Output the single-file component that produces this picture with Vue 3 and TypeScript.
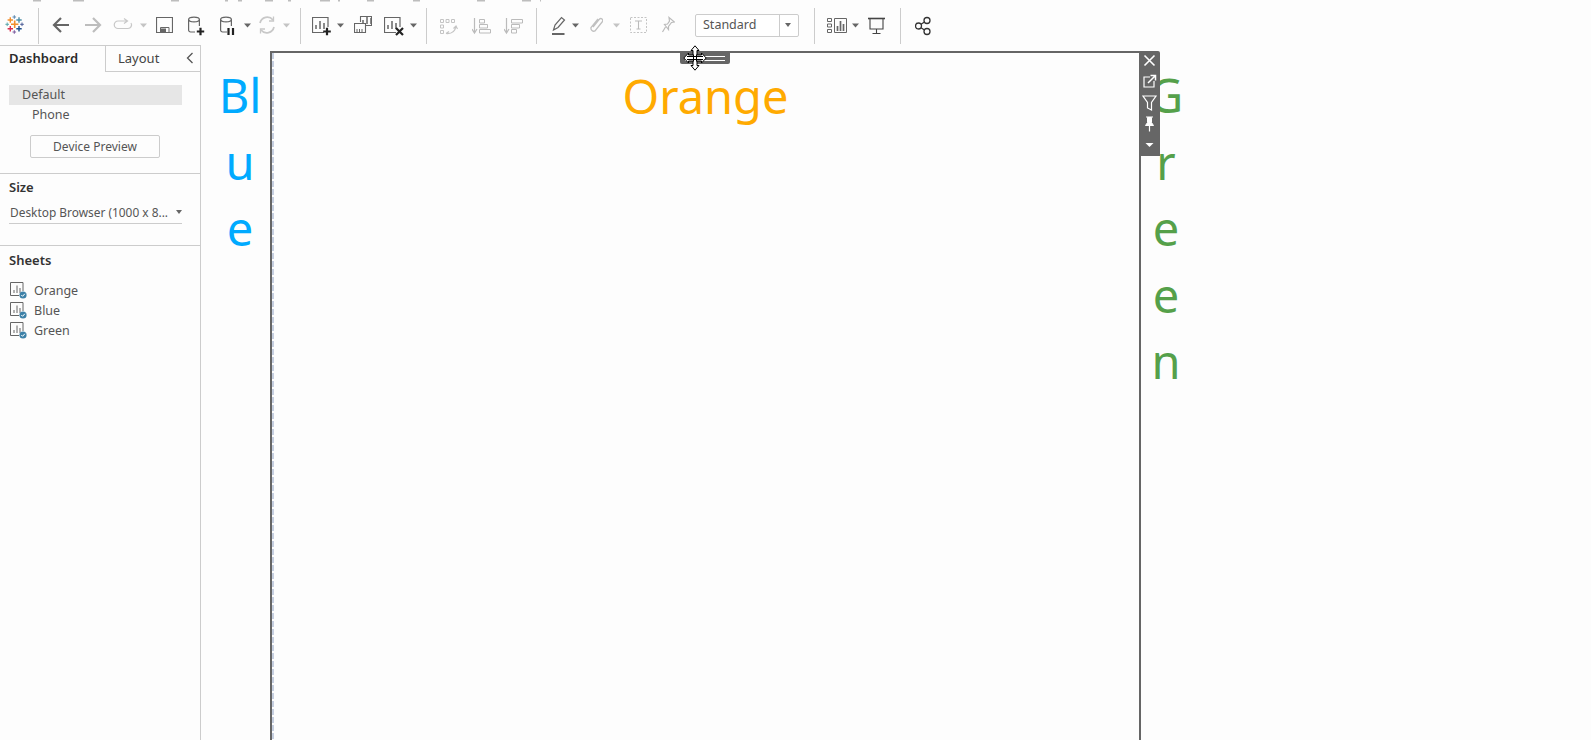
<script setup lang="ts">
interface Tool { gap: number; w: number; svg: string }

const cross = (x: number, y: number, a: number, t: number, c: string): string =>
  `<path d="M${x - a} ${y}H${x + a}M${x} ${y - a}V${y + a}" stroke="${c}" stroke-width="${t}" fill="none"/>`

const caret = (c = '#666'): Tool => ({ gap: 0, w: 7, svg: `<path d="M0 23.5H7L3.5 27.5Z" fill="${c}"/>` })
const at = (t: Tool, gap: number): Tool => ({ ...t, gap })
const G = '#bdbdbd'
const D = '#666'
const K = '#222'

const db = (c: string) =>
  `<g fill="none" stroke="${c}" stroke-width="1.2"><ellipse cx="6" cy="19.5" rx="5.4" ry="2.4"/><path d="M.6 19.5V30a2 2 0 0 0 2 2H7M11.4 19.5V26"/></g>`
const bars = (x: number, b: number, c = D) =>
  `<path d="M${x} ${b}v-4M${x + 4} ${b}v-8M${x + 8} ${b}v-6" stroke="${c}" stroke-width="1.5" fill="none"/>`
const chart = `<path d="M12 32.5H.5V17.5H16V27" fill="none" stroke="${D}" stroke-width="1.2"/>`

const leftTools: Tool[] = [
  {
    gap: 5, w: 20,
    svg: cross(9.7, 24.3, 3.7, 1.6, '#f28e2b') + cross(5.3, 20, 2.7, 1.4, '#f28e2b') + cross(14, 20, 2.7, 1.4, '#4e8ea6')
      + cross(9.3, 17, 1.8, 1, '#5a87b0') + cross(2.2, 24.3, 1.8, 1, '#59a6a8') + cross(17, 24.3, 1.8, 1, '#4c5c96')
      + cross(5.3, 28.7, 2.7, 1.4, '#d9304f') + cross(14, 28.7, 2.7, 1.4, '#1f4f8b') + cross(9.3, 32, 1.8, 1, '#7a5a9e'),
  },
  { gap: 13, w: 1, svg: `<rect y="8" width="1" height="36" fill="#ccc"/>` },
  { gap: 13, w: 18, svg: `<path d="M17 25H2M9 18L2 25L9 32" fill="none" stroke="${D}" stroke-width="2.2"/>` },
  { gap: 14, w: 18, svg: `<path d="M1 25H16M9 18L16 25L9 32" fill="none" stroke="${G}" stroke-width="2.2"/>` },
  { gap: 11, w: 20, svg: `<path d="M14 21H5a3.6 3.6 0 0 0 0 7.5H15a3.6 3.6 0 0 0 3-5.5M11 18.5L14.5 21L11 23.5" fill="none" stroke="#c8c8c8" stroke-width="1.2"/>` },
  at(caret('#c4c4c4'), 7),
  {
    gap: 9, w: 17,
    svg: `<path d="M.5 17.5H16.5V32.5H.5Z" fill="none" stroke="${D}" stroke-width="1.2"/><path d="M4.5 32.5V27.5H13V32.5" fill="none" stroke="${D}"/><rect x="5" y="28.5" width="5" height="4" fill="${D}"/>`,
  },
  { gap: 15, w: 18, svg: db(D) + cross(12.5, 31.5, 3.7, 2.2, K) },
  { gap: 14, w: 18, svg: db(D) + `<path d="M8.5 28V35M13 28V35" stroke="${K}" stroke-width="2.2"/>` },
  at(caret(), 6),
  {
    gap: 7, w: 18,
    svg: `<g fill="none" stroke="#c8c8c8" stroke-width="1.7"><path d="M2 23a7.4 7.4 0 0 1 13-3M16 27a7.4 7.4 0 0 1-13 3"/><path d="M15.5 16.5V21H11M2.5 33.5V29H7" stroke-width="1.3"/></g>`,
  },
  at(caret('#c4c4c4'), 7),
  { gap: 10, w: 1, svg: `<rect y="8" width="1" height="36" fill="#ccc"/>` },
  { gap: 11, w: 20, svg: chart + bars(4, 29) + cross(15, 31.5, 3.8, 2.2, K) },
  at(caret(), 5),
  {
    gap: 10, w: 18,
    svg: `<g fill="none" stroke="${D}" stroke-width="1.1"><path d="M6.5 22V16.5H17.5V25.5H12"/><path d="M.5 23.5H11.5V32.5H.5Z"/></g>` + bars(9, 24) + `<path d="M3 32v-3M5.5 32v-3M8 32v-3" stroke="${D}"/>`,
  },
  { gap: 12, w: 20, svg: chart + bars(4, 29) + `<path d="M12 28L19 35M19 28L12 35" stroke="${K}" stroke-width="2.2"/>` },
  at(caret(), 6),
  { gap: 9, w: 1, svg: `<rect y="8" width="1" height="36" fill="#ccc"/>` },
  {
    gap: 13, w: 18,
    svg: `<g fill="none" stroke="#c4c4c4"><path d="M.5 19.5h3v3h-3zM6 19.5h3v3H6zM11.5 19.5h3v3h-3zM.5 25h3v3h-3zM.5 30.5h3v3h-3z"/><path d="M6 33.5c5 .5 9-2 10-7M13.5 28.5l2.5-2.5 1.5 3M6 33.5l3-2" stroke-width="1.2"/></g>`,
  },
  {
    gap: 14, w: 19,
    svg: `<g fill="none" stroke="#bbb"><path d="M2.5 18V32M0 29L2.5 33L5 29" stroke-width="1.2"/><path d="M7.5 19.5h5v3.5h-5zM7.5 24.5h8v3.5h-8zM7.5 29.5h11v3.5h-11z"/></g>`,
  },
  {
    gap: 13, w: 19,
    svg: `<g fill="none" stroke="#bbb"><path d="M2.5 18V32M0 29L2.5 33L5 29" stroke-width="1.2"/><path d="M7.5 19.5h11v3.5h-11zM7.5 24.5h8v3.5h-8zM7.5 29.5h5v3.5h-5z"/></g>`,
  },
  { gap: 13, w: 1, svg: `<rect y="8" width="1" height="36" fill="#ccc"/>` },
  {
    gap: 15, w: 14,
    svg: `<path d="M1.5 30L3 25L9.5 17.5L12.5 20L6 27.5Z" fill="none" stroke="${D}" stroke-width="1.2"/><rect y="33" width="12.5" height="2" fill="${D}"/>`,
  },
  at(caret(), 6),
  {
    gap: 11, w: 13,
    svg: `<path d="M3 27L9.5 19a2 2 0 0 1 3 2.5L5 31a3 3 0 0 1-4-3.5L8 19" fill="none" stroke="#c0c0c0" stroke-width="1.3"/>`,
  },
  at(caret('#c4c4c4'), 10),
  {
    gap: 10, w: 17,
    svg: `<rect x=".5" y="17.5" width="16" height="15" fill="none" stroke="#c4c4c4" stroke-dasharray="2 1.5"/><path d="M5 21H12M8.5 21V29M6.5 29H10.5" fill="none" stroke="#bbb" stroke-width="1.1"/>`,
  },
  {
    gap: 14, w: 14,
    svg: `<path d="M8 17.5L13.5 22L10.5 22.5L7.5 26.5L7.5 29.5L3.5 24.5L6.5 24L8.5 21ZM4.5 27L1.5 32" fill="none" stroke="#bbb" stroke-width="1.2"/>`,
  },
]

const rightTools: Tool[] = [
  { gap: 15, w: 1, svg: `<rect y="8" width="1" height="36" fill="#ccc"/>` },
  {
    gap: 12, w: 20,
    svg: `<g fill="none" stroke="${D}"><path d="M.5 18.5h4v3h-4zM.5 24h4v3h-4zM.5 29.5h4v3h-4zM7.5 18.5h12v14h-12z"/></g><path d="M10.5 31v-5M13.5 31V21M16.5 31v-7" stroke="${D}" stroke-width="1.7"/>`,
  },
  at(caret(), 5),
  {
    gap: 9, w: 18,
    svg: `<path d="M0 18.5H17" stroke="#444" stroke-width="1.6"/><path d="M2 19V29H15V19M8.5 29V33.5M4.5 33.5H12.5" fill="none" stroke="#444" stroke-width="1.1"/>`,
  },
  { gap: 14, w: 1, svg: `<rect y="8" width="1" height="36" fill="#ccc"/>` },
  {
    gap: 14, w: 16,
    svg: `<g fill="none" stroke="#333" stroke-width="1.3"><circle cx="3.5" cy="26" r="3"/><circle cx="12" cy="20.5" r="3"/><circle cx="12" cy="31.5" r="3"/><path d="M6 24.3L9.5 22M6 27.7L9.5 30"/></g>`,
  },
]

const topMarks: [number, number][] = [
  [33, 8], [73, 11], [171, 8], [225, 3], [238, 4], [265, 8], [288, 3], [320, 10], [338, 2],
  [367, 7], [413, 7], [477, 8], [522, 9], [540, 1],
]

const sheets = ['Orange', 'Blue', 'Green']
</script>

<template>
  <div class="page">
    <svg class="marks" width="560" height="2">
      <rect v-for="m in topMarks" :key="m[0]" :x="m[0]" y="0" :width="m[1]" height="1.5" fill="#bdbdbd" />
    </svg>

    <header class="toolbar">
      <svg
        v-for="(t, i) in leftTools"
        :key="'l' + i"
        class="tool"
        :style="{ marginLeft: t.gap + 'px' }"
        :width="t.w"
        height="45"
        :viewBox="`0 0 ${t.w} 45`"
        v-html="t.svg"
      />
      <div class="mark-select">
        <span class="mark-value">Standard</span>
        <span class="mark-caret"></span>
      </div>
      <svg
        v-for="(t, i) in rightTools"
        :key="'r' + i"
        class="tool"
        :style="{ marginLeft: t.gap + 'px' }"
        :width="t.w"
        height="45"
        :viewBox="`0 0 ${t.w} 45`"
        v-html="t.svg"
      />
    </header>

    <main class="body">
      <aside class="sidebar">
        <nav class="tabs">
          <div class="tab active">Dashboard</div>
          <div class="tab other">
            <span>Layout</span>
            <svg width="8" height="12" viewBox="0 0 8 12"><path d="M6.5 1L1.5 6L6.5 11" fill="none" stroke="#555" stroke-width="1.3" /></svg>
          </div>
        </nav>

        <section class="devices">
          <div class="device selected">Default</div>
          <div class="device phone">Phone</div>
          <button class="preview" type="button">Device Preview</button>
        </section>

        <section class="size">
          <h3>Size</h3>
          <div class="size-select">
            <span>Desktop Browser (1000 x 8...</span>
            <i class="tiny-caret"></i>
          </div>
        </section>

        <section class="sheets">
          <h3>Sheets</h3>
          <ul>
            <li v-for="s in sheets" :key="s">
              <svg width="18" height="17" viewBox="0 0 18 17">
                <path d="M9 13.5H.5V.5H13V9" fill="none" stroke="#666" />
                <path d="M4 11V8M7 11V3.5M10 11V6" stroke="#666" fill="none" />
                <circle cx="13" cy="13" r="3.6" fill="#3d81a8" />
                <path d="M11.3 13L12.6 14.3L14.8 11.8" stroke="#fff" fill="none" />
              </svg>
              <span>{{ s }}</span>
            </li>
          </ul>
        </section>
      </aside>

      <section class="canvas">
        <div class="title col-blue">Blue</div>

        <div class="frame">
          <div class="title col-orange">Orange</div>

          <div class="handle">
            <svg width="50" height="13" viewBox="0 0 50 13">
              <path d="M5 5.5H45M5 9.5H45" stroke="#fff" />
            </svg>
          </div>

          <svg class="move-cursor" width="24" height="26" viewBox="0 0 24 26">
            <path
              d="M12 .8L16 5.5H14V10H18.5V8L23.2 13L18.5 18V16H14V20.5H16L12 25.2L8 20.5H10V16H5.5V18L.8 13L5.5 8V10H10V5.5H8Z"
              fill="#fff"
              stroke="#000"
            />
            <path d="M10.5 9.5V16.5M13.5 9.5V16.5M4 11.5H20M4 14.5H20" stroke="#000" fill="none" />
          </svg>

          <div class="float-bar">
            <svg width="21" height="20" viewBox="0 0 21 20"><path d="M5.5 4.5L15.5 14.5M15.5 4.5L5.5 14.5" stroke="#fff" stroke-width="1.6" /></svg>
            <svg width="21" height="21" viewBox="0 0 21 21">
              <path d="M11 6H5V16H15V10" fill="none" stroke="#fff" stroke-width="1.2" />
              <path d="M9 12L16 5M11.5 4.5H16.5V9.5" fill="none" stroke="#fff" stroke-width="1.5" />
            </svg>
            <svg width="21" height="21" viewBox="0 0 21 21"><path d="M4 4H17L12.5 10.5V18L8.5 16V10.5Z" fill="none" stroke="#fff" stroke-width="1.2" /></svg>
            <svg width="21" height="21" viewBox="0 -1.5 21 21"><path d="M7 2.5H14M8.5 3V8L6.5 11H14.5L12.5 8V3Z" fill="#fff" stroke="#fff" /><path d="M10.5 11V17" stroke="#fff" stroke-width="1.2" /></svg>
            <svg width="21" height="22" viewBox="0 0 21 22"><path d="M6.5 9H14.5L10.5 13Z" fill="#fff" /></svg>
          </div>
        </div>

        <div class="title col-green">Green</div>
      </section>
    </main>
  </div>
</template>

<style>
html, body { margin: 0; background: #fdfdfd; overflow: hidden; }
</style>

<style scoped>
.page {
  position: relative;
  width: 1591px;
  height: 740px;
  display: flex;
  flex-direction: column;
  overflow: hidden;
  background: #fdfdfd;
  font-family: "Noto Sans", "Open Sans", sans-serif;
  font-size: 12.5px;
  color: #555;
}
.marks { position: absolute; top: 0; left: 0; }

.toolbar {
  display: flex;
  align-items: flex-start;
  height: 45px;
  flex: none;
}
.tool { display: block; flex: none; }

.mark-select {
  display: flex;
  align-items: stretch;
  box-sizing: border-box;
  width: 104px;
  height: 23px;
  margin: 14px 0 0 20px;
  border: 1px solid #ccc;
  border-radius: 2px;
  background: #fff;
}
.mark-value {
  flex: 1;
  padding-left: 7px;
  line-height: 20px;
  font-size: 12.5px;
  color: #555;
}
.mark-caret {
  position: relative;
  width: 18px;
  border-left: 1px solid #ccc;
}
.mark-caret::after {
  content: "";
  position: absolute;
  left: 5px;
  top: 8px;
  border-left: 3.5px solid transparent;
  border-right: 3.5px solid transparent;
  border-top: 4px solid #666;
}

.body { flex: 1; display: flex; min-height: 0; }

.sidebar {
  width: 201px;
  flex: none;
  box-sizing: border-box;
  border-right: 1px solid #ccc;
  background: #fdfdfd;
}
.tabs {
  display: flex;
  height: 27px;
  box-sizing: border-box;
  border-top: 1px solid #ccc;
}
.tab { line-height: 24px; font-size: 13px; }
.tab.active {
  width: 106px;
  box-sizing: border-box;
  padding-left: 9px;
  border-right: 1px solid #ccc;
  font-weight: 600;
  color: #2b2b2b;
}
.tab.other {
  flex: 1;
  display: flex;
  align-items: center;
  justify-content: space-between;
  padding: 0 6px 2px 12px;
  border-bottom: 1px solid #ccc;
  color: #444;
}
.devices {
  height: 102px;
  box-sizing: border-box;
  padding: 13px 0 0 9px;
  border-bottom: 1px solid #ccc;
}
.device { height: 20px; line-height: 20px; color: #555; }
.device.selected { width: 173px; padding-left: 13px; box-sizing: border-box; background: #e6e6e6; }
.device.phone { padding-left: 23px; }
.preview {
  display: block;
  width: 130px;
  height: 23px;
  margin: 10px 0 0 21px;
  padding: 0;
  border: 1px solid #ccc;
  border-radius: 2px;
  background: #fdfdfd;
  font: inherit;
  font-size: 12px;
  color: #555;
}
h3 {
  margin: 0;
  font-size: 13px;
  font-weight: 600;
  line-height: 18px;
  color: #333;
}
.size {
  height: 72px;
  box-sizing: border-box;
  padding: 4px 0 0 9px;
  border-bottom: 1px solid #ccc;
}
.size-select {
  display: flex;
  align-items: center;
  justify-content: space-between;
  width: 173px;
  height: 24px;
  margin-top: 4px;
  padding-left: 1px;
  box-sizing: border-box;
  border-bottom: 1px solid #ccc;
  font-size: 11.9px;
  white-space: nowrap;
  color: #555;
}
.tiny-caret {
  border-left: 3.5px solid transparent;
  border-right: 3.5px solid transparent;
  border-top: 4px solid #666;
}
.sheets { padding: 5px 0 0 9px; }
.sheets ul { list-style: none; margin: 11px 0 0; padding: 0 0 0 1px; }
.sheets li { display: flex; align-items: center; height: 20px; gap: 6px; }

.canvas {
  flex: 1;
  display: flex;
  align-items: flex-start;
  padding-top: 6px;
  min-width: 0;
  position: relative;
}
.title {
  font-size: 47px;
  line-height: 66.5px;
  text-align: center;
  word-break: break-all;
}
.col-blue { width: 48px; margin: 11px 6px 0 15px; color: #00aaff; }
.col-green { width: 42px; margin: 11px 0 0 4px; color: #55a04a; }
.frame {
  position: relative;
  flex: none;
  width: 871px;
  height: 690px;
  box-sizing: border-box;
  border: solid #666;
  border-width: 2px 2px 0;
  background: #fdfdfd;
  background-image: repeating-linear-gradient(to bottom, #c6cfe0 0 6px, transparent 6px 8px);
  background-size: 2px 100%;
  background-repeat: no-repeat;
}
.col-orange { color: #ffaa00; margin-top: 10px; }
.handle {
  position: absolute;
  top: -2px;
  left: 408px;
  width: 50px;
  height: 13px;
  border-radius: 0 0 2px 2px;
  background: #666;
}
.handle svg { display: block; }
.move-cursor {
  position: absolute;
  top: -8px;
  left: 411px;
}
.float-bar {
  position: absolute;
  top: -2px;
  right: -21px;
  width: 21px;
  height: 105px;
  z-index: 2;
  display: flex;
  flex-direction: column;
  border-radius: 0 2px 0 0;
  background: #666;
}
.float-bar svg { display: block; flex: none; }
</style>
